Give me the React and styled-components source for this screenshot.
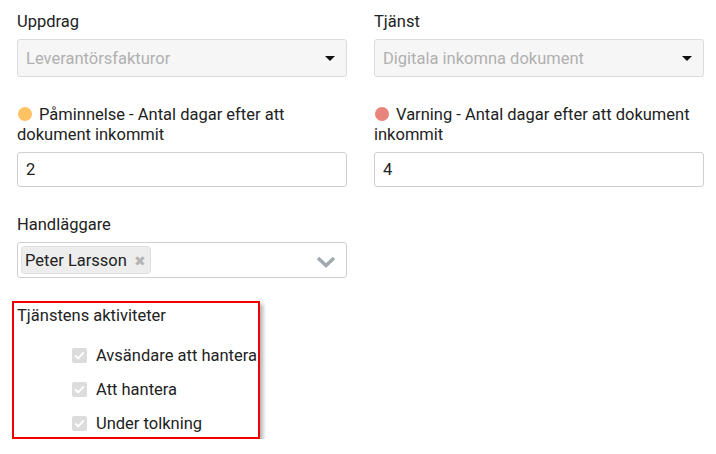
import React from 'react';
import styled, { createGlobalStyle } from 'styled-components';

const GlobalStyle = createGlobalStyle`
    body {
        margin: 0;
        background: #fff;
        font-family: Roboto, "Liberation Sans", sans-serif;
        color: #222;
    }
`;

function App() {
    return (
        <Page>
            <GlobalStyle />
            <Grid>
                <Field>
                    <Label>Uppdrag</Label>
                    <Select>
                        <span>Leverantörsfakturor</span>
                        <Caret />
                    </Select>
                </Field>
                <Field>
                    <Label>Tjänst</Label>
                    <Select>
                        <span>Digitala inkomna dokument</span>
                        <Caret />
                    </Select>
                </Field>

                <Field>
                    <Label>
                        <Dot color="#ffc262" />Påminnelse - Antal dagar efter att dokument inkommit
                    </Label>
                    <Input defaultValue="2" />
                </Field>
                <Field>
                    <Label>
                        <Dot color="#e8847b" />Varning - Antal dagar efter att dokument inkommit
                    </Label>
                    <Input defaultValue="4" />
                </Field>

                <Field>
                    <Label>Handläggare</Label>
                    <MultiSelect>
                        <Tag>
                            Peter Larsson
                            <TagRemove>✖</TagRemove>
                        </Tag>
                        <Chevron width="20" height="12" viewBox="0 0 20 12">
                            <path d="M2 2 L10 9.5 L18 2" fill="none" stroke="#a2aab0" strokeWidth="3.6" />
                        </Chevron>
                    </MultiSelect>
                </Field>
            </Grid>

            <Highlight>
                <Label>Tjänstens aktiviteter</Label>
                <CheckList>
                    {['Avsändare att hantera', 'Att hantera', 'Under tolkning'].map((t) => (
                        <CheckRow key={t}>
                            <CheckBox>
                                <svg width="11" height="9" viewBox="0 0 11 9">
                                    <path d="M1.2 4.6 L4.2 7.4 L9.8 1.4" fill="none" stroke="#fff" strokeWidth="2" />
                                </svg>
                            </CheckBox>
                            {t}
                        </CheckRow>
                    ))}
                </CheckList>
            </Highlight>
        </Page>
    );
}

const Page = styled.div`
    padding: 12px 0 0 17px;
    width: 687px;
    font-size: 16.5px;
`;

const Grid = styled.div`
    display: grid;
    grid-template-columns: 330px 330px;
    column-gap: 27px;
    row-gap: 28px;
`;

const Field = styled.div`
    display: flex;
    flex-direction: column;
    justify-content: flex-end;
`;

const Label = styled.div`
    line-height: 20px;
    margin-bottom: 7px;
    color: #222;
`;

const Dot = styled.span`
    display: inline-block;
    width: 14px;
    height: 14px;
    border-radius: 50%;
    background: ${(p) => p.color};
    margin: 0 7px 0 1px;
    vertical-align: -1px;
`;

const Select = styled.div`
    height: 38px;
    box-sizing: border-box;
    border: 1px solid #dcdcdc;
    border-radius: 3px;
    background: #f6f6f6;
    color: #b0b0b0;
    display: flex;
    align-items: center;
    justify-content: space-between;
    padding: 0 11px 0 8px;
`;

const Caret = styled.span`
    width: 0;
    height: 0;
    border-left: 5px solid transparent;
    border-right: 5px solid transparent;
    border-top: 5px solid #111;
`;

const Input = styled.input`
    height: 35px;
    box-sizing: border-box;
    border: 1px solid #cfcfcf;
    border-radius: 3px;
    padding: 0 8px;
    font: inherit;
    color: #222;
    outline: none;
`;

const MultiSelect = styled.div`
    height: 36px;
    box-sizing: border-box;
    border: 1px solid #d0d0d0;
    border-radius: 3px;
    display: flex;
    align-items: center;
    justify-content: space-between;
    padding: 0 10px 0 3px;
`;

const Tag = styled.div`
    height: 28px;
    box-sizing: border-box;
    background: #ededed;
    border: 1px solid #dedede;
    border-radius: 4px;
    display: flex;
    align-items: center;
    padding: 0 4px 0 3px;
    color: #222;
`;

const TagRemove = styled.span`
    color: #b5b5b5;
    font-size: 14px;
    margin-left: 7px;
    margin-top: 2px;
`;

const Chevron = styled.svg`
    display: block;
    margin-top: 4px;
`;

const Highlight = styled.div`
    margin: 23px 0 0 -5px;
    width: 248px;
    box-sizing: border-box;
    border: 2px solid #ee0000;
    box-shadow: 3px 3px 4px rgba(0, 0, 0, 0.3);
    padding: 3px 0 3px 3px;

    ${Label} {
        margin-bottom: 0;
    }
`;

const CheckList = styled.div`
    display: flex;
    flex-direction: column;
    padding: 20px 0 0 55px;
    gap: 14px;
`;

const CheckRow = styled.div`
    display: flex;
    align-items: center;
    line-height: 20px;
    gap: 9px;
    white-space: nowrap;
`;

const CheckBox = styled.span`
    width: 15px;
    height: 15px;
    border-radius: 2px;
    background: #dcdcdc;
    display: flex;
    align-items: center;
    justify-content: center;
    margin-top: -1px;
`;

export default App;
